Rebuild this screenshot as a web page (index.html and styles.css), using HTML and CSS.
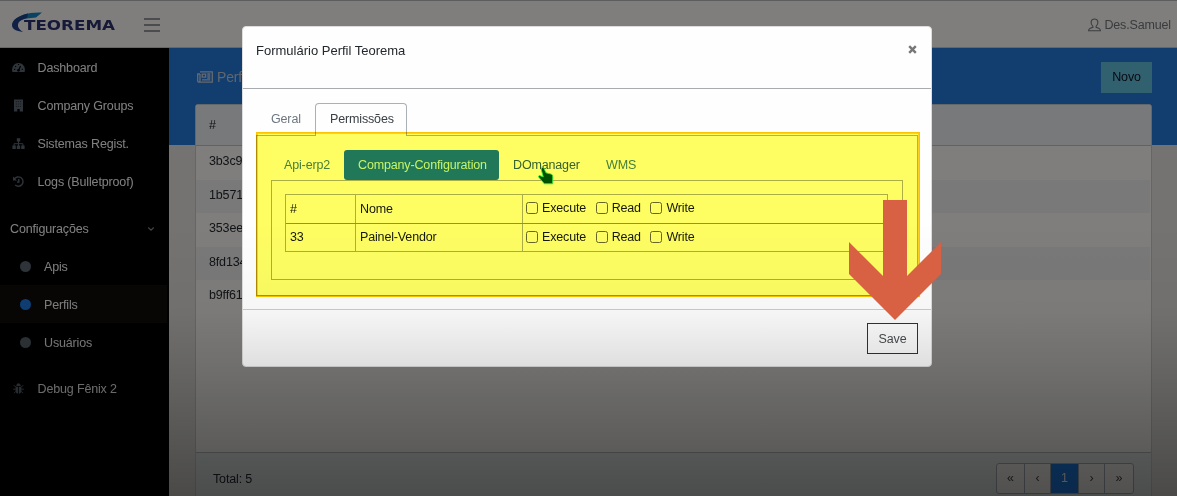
FILE: index.html
```html
<!DOCTYPE html>
<html lang="pt-BR">
<head>
    <meta charset="UTF-8">
    <meta name="viewport" content="width=device-width, initial-scale=1.0">
    <title>Teorema - Perfils</title>
    <link rel="stylesheet" href="styles.css">
</head>
<body>

    <header class="topbar">
        <svg class="logo" width="106" height="24" viewBox="0 0 106 24">
            <path d="M31 1.5 C17 1 8 4 4 9 L8 10.5 C12 7.5 19 7 25 6.5 Z" fill="#1089c4"/>
            <path d="M17 2.5 C7 5 1 9 1 14 C1 18 5 20 12 21 C7 18 5.5 14 8.5 10.5 C10.5 8.4 13 7.5 16 7 Z" fill="#20428a"/>
            <text x="13" y="18.5" textLength="91" lengthAdjust="spacingAndGlyphs">TEOREMA</text>
        </svg>
        <div class="burger"><span></span><span></span><span></span></div>
        <div class="user">
            <svg width="13" height="14" viewBox="0 0 13 14" fill="none" stroke="#777a80" stroke-width="1.1">
                <path d="M4.9 8.4 C1.8 5.4 2.8 1 6.5 1 C10.2 1 11.2 5.4 8.1 8.4 V9.3 L11.3 10.6 Q12.3 11.2 12.4 12.8 H.6 Q.7 11.2 1.7 10.6 L4.9 9.3 Z"/>
            </svg>
            Des.Samuel
        </div>
    </header>

    <div class="layout">
        <nav class="sidebar">
            <div class="nav-item">
                <svg width="13" height="13" viewBox="0 0 13 13"><path d="M.5 11 Q-.5 8 1 5.3 Q3 2 6.5 2 Q10 2 12 5.3 Q13.5 8 12.5 11 Z" fill="#5c6873"/><path d="M6.5 9.5 L8.5 5 M6.5 3v1 M2 8.3h1.2 M3.2 5.2l.9.7 M10.8 8.3h-1" stroke="#000" stroke-width="1.2"/><circle cx="6.5" cy="9.3" r="1.4" fill="#000"/></svg>
                Dashboard
            </div>
            <div class="nav-item">
                <svg width="13" height="13" viewBox="0 0 13 13"><path d="M2 .5h9v12H7.7v-2.5H5.3v2.5H2z" fill="#5c6873"/><path d="M3.8 2.6h5.5 M3.8 5h5.5 M3.8 7.4h5.5" stroke="#222" stroke-width=".7" stroke-dasharray="1.2 .9"/></svg>
                Company Groups
            </div>
            <div class="nav-item">
                <svg width="13" height="13" viewBox="0 0 13 13"><path d="M4.8 1.2h3.4v3.4H4.8z M.4 8.6h3.4V12H.4z M4.8 8.6h3.4V12H4.8z M9.2 8.6h3.4V12H9.2z" fill="#5c6873"/><path d="M6.5 4v5 M2.1 9V6.7h8.8V9" fill="none" stroke="#5c6873"/></svg>
                Sistemas Regist.
            </div>
            <div class="nav-item">
                <svg width="13" height="13" viewBox="0 0 13 13"><path d="M2.4 4 A4.7 4.7 0 1 1 3.2 10.1 M6.8 4v3H5" fill="none" stroke="#5c6873" stroke-width="1.4"/><path d="M1 1.5v4h4z" fill="#5c6873"/></svg>
                Logs (Bulletproof)
            </div>
            <div class="nav-title">
                Configurações
                <svg width="8" height="8" viewBox="0 0 8 8"><path d="M1.3 2.5 L4 5.2 L6.7 2.5" fill="none" stroke="#868b90" stroke-width="1.1"/></svg>
            </div>
            <div class="nav-sub"><i class="dot"></i>Apis</div>
            <div class="nav-sub active"><i class="dot"></i>Perfils</div>
            <div class="nav-sub"><i class="dot"></i>Usuários</div>
            <div class="nav-item debug">
                <svg width="13" height="13" viewBox="0 0 13 13"><path d="M4.2 4 Q4.4 1.3 6.5 1.3 Q8.6 1.3 8.8 4z M3.6 4.7h2.5v7 Q3.6 11.3 3.6 8.4z M6.9 4.7h2.5v3.7 Q9.4 11.3 6.9 11.7z" fill="#5c6873"/><path d="M1.8 3.2l2 2 M11.2 3.2l-2 2 M1.2 7.2h2.6 M9.2 7.2h2.6 M2 11.2l2-2 M11 11.2l-2-2" stroke="#5c6873"/></svg>
                Debug Fênix 2
            </div>
        </nav>

        <main class="main">
            <div class="page-head">
                <div class="page-title">
                    <svg width="16" height="12" viewBox="0 0 16 12" fill="none" stroke="#c9d4e2" stroke-width="1.3"><path d="M3 .8h12.3v10.4H2 Q.7 11.2.7 9.8V3H3 M3 3v6.5 Q3 11 2 11.2"/><path d="M5.2 3.2h3.4v3H5.2z M10.3 3h3 M10.3 5h3 M10.3 7h3 M5 8.8h8.3"/></svg>
                    Perfils
                </div>
                <button class="btn-new">Novo</button>
            </div>
            <section class="card">
                <div class="card-head">#</div>
                <div class="rows">
                    <div class="row">3b3c9</div>
                    <div class="row">1b571</div>
                    <div class="row">353ee</div>
                    <div class="row">8fd134</div>
                    <div class="row">b9ff61</div>
                </div>
                <div class="card-foot">
                    <span>Total: 5</span>
                    <div class="pages"><a>«</a><a>‹</a><a class="current">1</a><a>›</a><a>»</a></div>
                </div>
            </section>
        </main>
    </div>

    <div class="backdrop"></div>

    <div class="modal">
        <div class="modal-head">
            <span>Formulário Perfil Teorema</span>
            <svg width="9" height="9" viewBox="0 0 9 9"><path d="M1.2 1.2l6.6 6.6 M7.8 1.2L1.2 7.8" stroke="#777" stroke-width="2.4"/></svg>
        </div>
        <div class="modal-body">
            <div class="tabs">
                <div class="tab">Geral</div>
                <div class="tab selected">Permissões</div>
            </div>
            <div class="panel">
                <div class="pills">
                    <a>Api-erp2</a>
                    <a class="on">Company-Configuration</a>
                    <a class="hover">DOmanager</a>
                    <a>WMS</a>
                </div>
                <div class="inner">
                    <div class="perms">
                        <div class="perm">
                            <div>#</div>
                            <div>Nome</div>
                            <div class="checks">
                                <label><input type="checkbox">Execute</label>
                                <label><input type="checkbox">Read</label>
                                <label><input type="checkbox">Write</label>
                            </div>
                        </div>
                        <div class="perm">
                            <div>33</div>
                            <div>Painel-Vendor</div>
                            <div class="checks">
                                <label><input type="checkbox">Execute</label>
                                <label><input type="checkbox">Read</label>
                                <label><input type="checkbox">Write</label>
                            </div>
                        </div>
                    </div>
                </div>
            </div>
        </div>
        <div class="modal-foot">
            <button class="btn-save">Save</button>
        </div>
    </div>

    <div class="shade"></div>
    <div class="highlight"></div>

    <svg class="cursor" width="17" height="20" viewBox="0 0 17 20">
        <path d="M4.5 2 Q6 .5 7 2.5 L9 6.8 L14.5 8.2 Q16 9 15.8 11 L15.6 17.8 H7.3 L2 11.5 Q.8 10 2.3 9.5 L6.3 10.8 L4.2 3.6 Z" fill="#005000" stroke="#35ea32" stroke-width=".9"/>
    </svg>

    <svg class="arrow" width="92" height="120" viewBox="0 0 92 120">
        <path d="M34 0H58V76L92 42V74L46 120L0 74V42L34 76Z" fill="#d86143"/>
    </svg>

</body>
</html>
```
FILE: styles.css
```css
* {
    box-sizing: border-box;
}
body {
    margin: 0;
    height: 496px;
    overflow: hidden;
    position: relative;
    font-family: "Liberation Sans", Arial, sans-serif;
    font-size: 12.5px;
    letter-spacing: -0.15px;
    color: #23282c;
    background-color: #e8e6e3;
}
button {
    font: inherit;
    letter-spacing: inherit;
}

/* top bar */
.topbar {
    height: 48px;
    display: flex;
    align-items: center;
    padding: 1px 6px 0 11px;
    background-color: #fffdf8;
    border-top: 1px solid #b8babd;
    border-bottom: 1px solid #c8ced3;
}
.logo text {
    font-family: "DejaVu Sans", sans-serif;
    font-size: 14px;
    font-weight: bold;
    letter-spacing: 0;
    fill: #2c3370;
}
.logo {
    margin-top: -3px;
}
.burger {
    margin-left: 27px;
    display: flex;
    flex-direction: column;
    gap: 4px;
}
.burger span {
    width: 16px;
    height: 2px;
    background-color: #96989b;
}
.user {
    margin-left: auto;
    display: flex;
    align-items: center;
    gap: 3px;
    color: #73777c;
}

/* sidebar */
.layout {
    display: flex;
    height: 448px;
}
.sidebar {
    width: 169px;
    flex-shrink: 0;
    background-color: #000;
    color: #fff;
}
.nav-item {
    height: 38px;
    display: flex;
    align-items: center;
    gap: 12.5px;
    padding: 1px 0 0 12px;
}
.nav-title {
    height: 38px;
    margin-top: 9px;
    display: flex;
    align-items: center;
    justify-content: space-between;
    padding: 1px 14px 0 10px;
}
.nav-sub {
    height: 38px;
    display: flex;
    align-items: center;
    gap: 13px;
    padding: 1px 0 0 20px;
}
.nav-sub.active {
    width: 167px;
    background-color: #0e0c0a;
}
.dot {
    width: 11px;
    height: 11px;
    border-radius: 50%;
    background-color: #5c6873;
}
.active .dot {
    background-color: #1f7fe8;
}
.debug {
    margin-top: 8px;
}

/* page content */
.main {
    flex: 1;
    padding: 0 25px 0 26px;
    background: linear-gradient(#227ade 97px, #e8e6e3 97px);
}
.page-head {
    height: 56px;
    display: flex;
    align-items: center;
    justify-content: space-between;
    padding: 2px 0 0 2px;
}
.page-title {
    display: flex;
    align-items: center;
    gap: 4px;
    font-size: 14px;
    color: #c0ccda;
}
.btn-new {
    width: 51px;
    height: 31px;
    padding: 0;
    border: 0;
    background-color: #63c2de;
    color: #112;
}
.card {
    height: 400px;
    background-color: #fffdf8;
    border: 1px solid #c8ced3;
    border-radius: 3px 3px 0 0;
}
.card-head {
    height: 41px;
    padding: 13px 0 0 13px;
    background-color: #f0f3f5;
    border-bottom: 1px solid #c0c6cb;
}
.rows {
    height: 306px;
    margin-right: 1px;
}
.row {
    height: 33.6px;
    line-height: 31px;
    padding-left: 13px;
}
.row:nth-child(even) {
    background-color: #f2f3f5;
}
.card-foot {
    height: 52px;
    display: flex;
    align-items: center;
    justify-content: space-between;
    padding: 0 17px;
    background-color: #eaf0f1;
    border-top: 1px solid #b8bec3;
}
.pages {
    display: flex;
    height: 31px;
    border: 1px solid #a9b2ba;
    border-radius: 3px;
    background-color: #fcfaf6;
}
.pages a {
    width: 26px;
    line-height: 28px;
    text-align: center;
    border-right: 1px solid #a9b2ba;
    color: #444;
}
.pages a:first-child,
.pages a:last-child,
.pages .current {
    width: 28px;
}
.pages a:last-child {
    border-right: 0;
}
.pages .current {
    background-color: #1f7fe8;
    color: #fff;
}

/* modal */
.backdrop {
    position: absolute;
    inset: 0;
    background-color: rgba(0, 0, 0, 0.5);
}
.modal {
    position: absolute;
    left: 242px;
    top: 26px;
    width: 690px;
    height: 341px;
    display: flex;
    flex-direction: column;
    background-color: #fefefe;
    border: 1px solid #ddd;
    border-radius: 4px;
}
.modal-head {
    height: 62px;
    display: flex;
    justify-content: space-between;
    padding: 16px 14px 0 13px;
    font-size: 13px;
    letter-spacing: 0;
    border-bottom: 1px solid #a9acaf;
}
.modal-head svg {
    margin-top: 2px;
}
.modal-body {
    height: 220px;
    padding: 14px 13px 13px;
}
.tabs {
    display: flex;
    height: 33px;
    margin-bottom: -1px;
    position: relative;
}
.tab {
    width: 59px;
    padding: 9px 0 0 15px;
    color: #6d7780;
}
.tab.selected {
    width: 92px;
    padding: 8px 0 0 14px;
    color: #3a4045;
    background-color: #fefefe;
    border: 1px solid #a9b0b6;
    border-bottom: 0;
    border-radius: 4px 4px 0 0;
}
.panel {
    height: 161px;
    padding: 14px;
    border: 1px solid #b0b3b6;
}
.pills {
    display: flex;
    height: 30px;
}
.pills a {
    padding: 8px 0 0 13px;
    white-space: nowrap;
    color: #457f99;
}
.pills a:first-child {
    width: 73px;
}
.pills .on {
    width: 155px;
    padding-left: 14px;
    border-radius: 3px;
    background-color: #2078e3;
    color: #c8f4ff;
}
.pills .hover {
    width: 94px;
    padding-left: 14px;
    color: #356078;
}
.inner {
    height: 100px;
    padding: 13px 14px 0 13px;
    border: 1px solid #aaaeb1;
}
.perms {
    border: 1px solid #aaaeb1;
}
.perm {
    display: grid;
    grid-template-columns: 69px 167px 1fr;
    height: 28px;
    color: #15181b;
}
.perm + .perm {
    border-top: 1px solid #8f9497;
}
.perm > div {
    padding: 7px 0 0 4px;
    border-left: 1px solid #aaaeb1;
}
.perm > div:first-child {
    border-left: 0;
}
.perm + .perm > div {
    padding-top: 6px;
}
.perm .checks {
    display: flex;
    gap: 9.5px;
    padding-top: 6px;
    padding-left: 3px;
}
.checks label {
    display: flex;
    height: 15px;
}
.checks input {
    appearance: none;
    width: 12px;
    height: 12px;
    margin: 1px 4px 0 0;
    border: 1px solid #666;
    border-radius: 2.5px;
}
.modal-foot {
    flex: 1;
    display: flex;
    justify-content: flex-end;
    padding: 13px 13px 0;
    border-top: 1px solid #ccc;
}
.btn-save {
    width: 51px;
    height: 31px;
    padding: 0;
    border: 1px solid #333;
    background-color: #fff;
    color: #4a4d50;
}

/* darkening towards the bottom of the page */
.shade {
    position: absolute;
    inset: 0;
    background: linear-gradient(rgba(0, 0, 0, 0) 220px, rgba(0, 0, 0, 0.03) 310px, rgba(0, 0, 0, 0.12) 366px, rgba(0, 0, 0, 0.36) 496px);
}
.highlight {
    position: absolute;
    left: 256px;
    top: 132px;
    width: 664px;
    height: 165px;
    border: 1px solid #ffc400;
    box-shadow: inset 0 0 0 1px #ffd21c;
    background-color: #ffff63;
    mix-blend-mode: multiply;
}
.cursor {
    position: absolute;
    left: 537px;
    top: 166px;
}
.arrow {
    position: absolute;
    left: 849px;
    top: 200px;
}
```
